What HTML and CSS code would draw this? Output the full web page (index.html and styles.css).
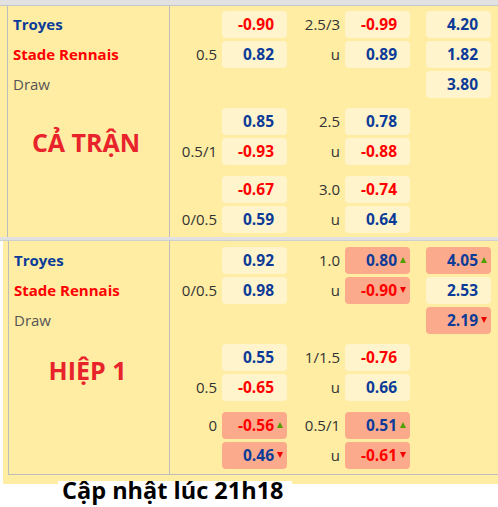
FILE: index.html
```html
<!DOCTYPE html>
<html lang="vi">
<head>
<meta charset="utf-8">
<title>Odds</title>
<link rel="stylesheet" href="styles.css">
</head>
<body>
<div class="page">
  <section class="sec sec-full">
    <div class="band band-top"></div>
    <div class="tbl">
      <div class="names">
        <div class="name home">Troyes</div>
        <div class="name away">Stade Rennais</div>
        <div class="name draw">Draw</div>
        <div class="big big-full">CẢ TRẬN</div>
      </div>
      <div class="odds">
        <div class="grp">
          <div class="lbl"></div><div class="cell red">-0.90</div><div class="lbl">2.5/3</div><div class="cell red">-0.99</div><div class="sp"></div><div class="cell">4.20</div>
          <div class="lbl">0.5</div><div class="cell">0.82</div><div class="lbl">u</div><div class="cell">0.89</div><div class="sp"></div><div class="cell">1.82</div>
          <div class="lbl"></div><div class="empty"></div><div class="lbl"></div><div class="empty"></div><div class="sp"></div><div class="cell">3.80</div>
        </div>
        <div class="grp grp2">
          <div class="lbl"></div><div class="cell">0.85</div><div class="lbl">2.5</div><div class="cell">0.78</div><div class="sp"></div><div class="empty"></div>
          <div class="lbl">0.5/1</div><div class="cell red">-0.93</div><div class="lbl">u</div><div class="cell red">-0.88</div><div class="sp"></div><div class="empty"></div>
        </div>
        <div class="grp grp3">
          <div class="lbl"></div><div class="cell red">-0.67</div><div class="lbl">3.0</div><div class="cell red">-0.74</div><div class="sp"></div><div class="empty"></div>
          <div class="lbl">0/0.5</div><div class="cell">0.59</div><div class="lbl">u</div><div class="cell">0.64</div><div class="sp"></div><div class="empty"></div>
        </div>
      </div>
    </div>
  </section>
  <section class="sec sec-half">
    <div class="band band-mid"></div>
    <div class="tbl tbl-half">
      <div class="names names-half">
        <div class="name home">Troyes</div>
        <div class="name away">Stade Rennais</div>
        <div class="name draw">Draw</div>
        <div class="big big-half">HIỆP 1</div>
      </div>
      <div class="odds odds-half">
        <div class="grp">
          <div class="lbl"></div><div class="cell">0.92</div><div class="lbl">1.0</div><div class="cell hl up">0.80</div><div class="sp"></div><div class="cell hl up">4.05</div>
          <div class="lbl">0/0.5</div><div class="cell">0.98</div><div class="lbl">u</div><div class="cell hl down red">-0.90</div><div class="sp"></div><div class="cell">2.53</div>
          <div class="lbl"></div><div class="empty"></div><div class="lbl"></div><div class="empty"></div><div class="sp"></div><div class="cell hl down">2.19</div>
        </div>
        <div class="grp grp2">
          <div class="lbl"></div><div class="cell">0.55</div><div class="lbl">1/1.5</div><div class="cell red">-0.76</div><div class="sp"></div><div class="empty"></div>
          <div class="lbl">0.5</div><div class="cell red">-0.65</div><div class="lbl">u</div><div class="cell">0.66</div><div class="sp"></div><div class="empty"></div>
        </div>
        <div class="grp grp3">
          <div class="lbl">0</div><div class="cell hl up red">-0.56</div><div class="lbl">0.5/1</div><div class="cell hl up">0.51</div><div class="sp"></div><div class="empty"></div>
          <div class="lbl"></div><div class="cell hl down">0.46</div><div class="lbl">u</div><div class="cell hl down red">-0.61</div><div class="sp"></div><div class="empty"></div>
        </div>
      </div>
    </div>
  </section>
  <div class="footer">Cập nhật lúc 21h18</div>
</div>
</body>
</html>
```

FILE: styles.css
```css
* { box-sizing: border-box; }
html, body { margin: 0; padding: 0; background: #ffffff; }
body { font-family: "Open Sans", "Liberation Sans", sans-serif; width: 498px; }

.page { width: 498px; }

.sec { background: #ffeda3; }
.sec-full { padding-left: 7px; }
.sec-half { margin-left: 3px; padding-left: 5px; padding-bottom: 9px; }

.band { background: #e1e1e1; }
.band-top { height: 6px; margin-left: -7px; border-bottom: 1px solid #c6c6c6; }
.band-mid { height: 4px; margin-left: -8px; border-bottom: 1px solid #cfcfcf; }

.tbl { display: flex; border-left: 1px solid #bdbdbd; }
.tbl-half { border-bottom: 1px solid #bdbdbd; }

.names {
  width: 162px;
  border-right: 1px solid #bdbdbd;
  padding: 5px 0 0 5px;
  display: flex;
  flex-direction: column;
  row-gap: 3px;
}
.names-half { width: 161px; padding-top: 6px; padding-left: 5px; }

.name { height: 27px; line-height: 27px; font-size: 15px; white-space: nowrap; }
.home { color: #0b3b98; font-weight: 700; }
.away { color: #ff0000; font-weight: 700; }
.draw { color: #555555; font-weight: 400; }

.big {
  color: #e8232b;
  font-weight: 700;
  font-size: 25px;
  line-height: 30px;
  text-align: center;
  padding-right: 10px;
}
.big-full { margin-top: 26px; }
.big-half { margin-top: 18px; padding-right: 8px; }

.odds { flex: 1; padding: 5px 0 4px 0; }
.odds-half { padding: 6px 0 5px 0; }

.grp {
  display: grid;
  grid-template-columns: 52px 65px 58px 65px 16px 65px;
  grid-auto-rows: 27px;
  row-gap: 3px;
}
.grp2 { margin-top: 10px; }
.grp3 { margin-top: 11px; }

.lbl {
  text-align: right;
  padding-right: 5px;
  font-size: 15px;
  line-height: 27px;
  color: #333333;
}

.cell {
  position: relative;
  background: #fff4cb;
  border-radius: 4px;
  text-align: right;
  padding-right: 13px;
  font-weight: 700;
  font-size: 15.5px;
  line-height: 27px;
  color: #0b3b98;
}
.cell.red { color: #ff0000; }
.cell.hl { background: #fbab8b; }

.cell.up::after,
.cell.down::after {
  content: "";
  position: absolute;
  right: 4px;
  top: 10px;
  width: 0;
  height: 0;
  border-left: 3px solid transparent;
  border-right: 3px solid transparent;
}
.cell.up::after { border-bottom: 6px solid #4fa000; }
.cell.down::after { border-top: 6px solid #ee0000; }

.footer {
  position: relative;
  margin-top: -3px;
  margin-left: 58px;
  width: 234px;
  padding-left: 4px;
  background: #ffffff;
  color: #000000;
  font-weight: 700;
  font-size: 23.5px;
  line-height: 16px;
  height: 26px;
  padding-top: 1px;
}
```
